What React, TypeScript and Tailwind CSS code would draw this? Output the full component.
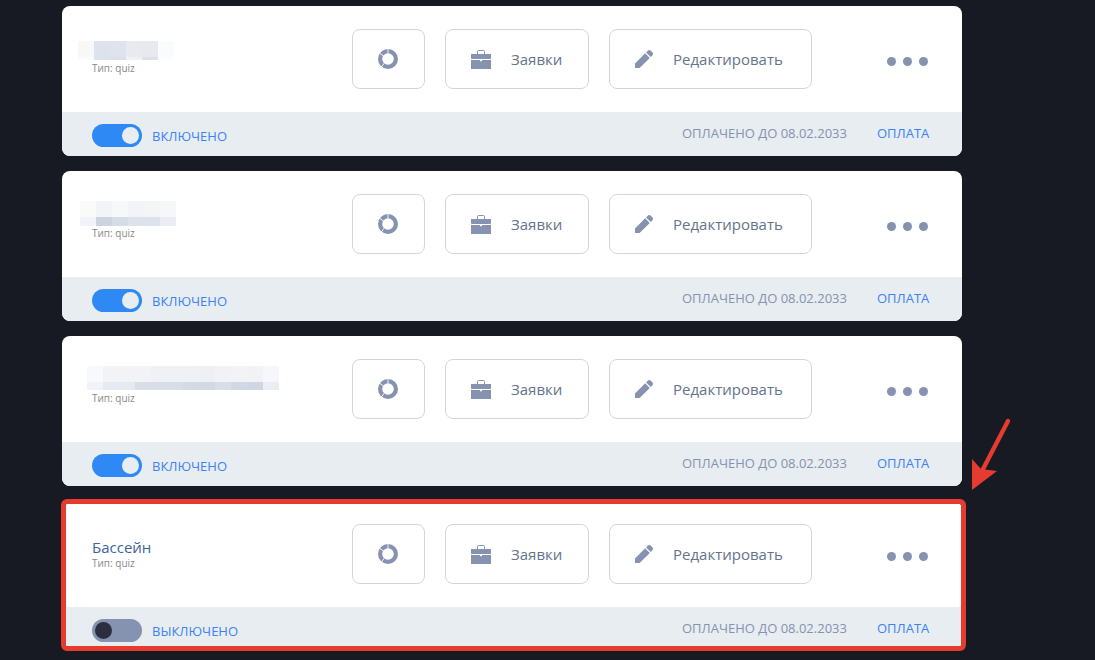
import clsx from 'clsx'

interface Mask {
  position: string
  bottomRow: string
  rows: string[][]
}

interface Quiz {
  id: string
  name?: string
  mask?: Mask
  enabled: boolean
  marked?: boolean
}

const paidUntil = '08.02.2033'

const quizzes: Quiz[] = [
  {
    id: 'quiz-1',
    enabled: true,
    mask: {
      position: '-left-3.5 -top-px',
      bottomRow: 'h-[3px]',
      rows: [
        ['bg-[#f8f8f9]', 'bg-[#dce3ed]', 'bg-[#dfe3ed]', 'bg-[#e9eaf0]', 'bg-[#e8e9ee]', 'bg-[#fafbfd]'],
        ['bg-[#fbfbfc]', 'bg-[#dce3ed]', 'bg-[#dbe1eb]', 'bg-[#f0f1f6]', 'bg-[#dbe1eb]', 'bg-[#fdfdfe]'],
      ],
    },
  },
  {
    id: 'quiz-2',
    enabled: true,
    mask: {
      position: '-left-3 -top-1.5',
      bottomRow: 'h-[9px]',
      rows: [
        ['bg-[#fafaf9]', 'bg-[#f2f4f8]', 'bg-[#f6f8fa]', 'bg-[#f3f4f8]', 'bg-[#f4f5f7]', 'bg-[#f6f7f9]'],
        ['bg-[#f2f3f8]', 'bg-[#cdd3df]', 'bg-[#d5dce6]', 'bg-[#dee2ea]', 'bg-[#dce3ed]', 'bg-[#eaedf3]'],
      ],
    },
  },
  {
    id: 'quiz-3',
    enabled: true,
    mask: {
      position: '-left-[5px] -top-1.5',
      bottomRow: 'h-2',
      rows: [
        ['bg-[#f8f9fb]', 'bg-[#f2f3f7]', 'bg-[#f2f3f7]', 'bg-[#f3f3f5]', 'bg-[#f0f1f5]', 'bg-[#f0f1f5]', 'bg-[#f0f1f5]', 'bg-[#eff0f4]', 'bg-[#f2f2f4]', 'bg-[#f2f3f6]', 'bg-[#f1f2f6]', 'bg-[#f6f7fa]'],
        ['bg-[#f2f3f8]', 'bg-[#e5e9f0]', 'bg-[#e5e9f0]', 'bg-[#d9dde8]', 'bg-[#d8dee8]', 'bg-[#d8dee8]', 'bg-[#d3dae6]', 'bg-[#d2d8e4]', 'bg-[#d9dde6]', 'bg-[#cfd9e5]', 'bg-[#cfd6e2]', 'bg-[#eaedf2]'],
      ],
    },
  },
  { id: 'quiz-4', name: 'Бассейн', enabled: false, marked: true },
]

function RingIcon() {
  return (
    <svg className="size-5" viewBox="0 0 20 20" fill="none" aria-hidden="true">
      <circle cx="10" cy="10" r="7.9" stroke="#8592b0" strokeWidth="4.2" />
      <path d="M10 0v4.5M1.2 4l4.6 3.2M3.4 18l2.8-3.8" stroke="#fff" strokeWidth="0.9" />
    </svg>
  )
}

function BriefcaseIcon() {
  return (
    <svg className="size-5" viewBox="0 0 20 20" aria-hidden="true">
      <path d="M6.5 5V2.5a1 1 0 0 1 1-1h5a1 1 0 0 1 1 1V5" fill="none" stroke="#8592b0" />
      <path d="M0 5h20v4.5l-1 .5H1l-1-.5zM0 10.7l1 .3h8v1.3h2V11h8l1-.3V20H0z" fill="#8592b0" />
    </svg>
  )
}

function PencilIcon() {
  return (
    <svg className="size-[18px]" viewBox="0 0 18 18" fill="#8592b0" aria-hidden="true">
      <path d="M0 18v-4.6L10.2 3.3l4.6 4.6L4.6 18zM11.1 2.4l1.6-1.6a2.2 2.2 0 0 1 3.1 0l1.5 1.5a2.2 2.2 0 0 1 0 3.1L15.7 7z" />
    </svg>
  )
}

function HiddenName({ position, bottomRow, rows }: Mask) {
  return (
    <span className={clsx('absolute', position)}>
      {rows.map((cells, row) => (
        <span key={row} className="flex">
          {cells.map((color, i) => (
            <span key={i} className={clsx('w-4', row === 0 ? 'h-4' : bottomRow, color)} />
          ))}
        </span>
      ))}
    </span>
  )
}

function Marker() {
  return (
    <>
      <div className="pointer-events-none absolute -left-px -right-1 -top-0.5 bottom-0 rounded-md border-[5px] border-[#e63c30]" />
      <svg className="absolute -right-[50px] -top-[84px] h-[75px] w-[42px]" viewBox="0 0 42 75" aria-hidden="true">
        <path d="M38 4 12 54" stroke="#e63c30" strokeWidth="4.4" strokeLinecap="round" />
        <path d="M2 73V42l9 10 16 2z" fill="#e63c30" />
      </svg>
    </>
  )
}

const buttonStyle =
  'flex h-[60px] shrink-0 items-center gap-5 rounded-lg border border-[#d2d5da] px-[25px] text-[15px] text-[#64748b]'

function QuizCard({ id, name, mask, enabled, marked }: Quiz) {
  return (
    <article className="relative">
      <div className="overflow-hidden rounded-lg bg-white">
        <div className="flex h-[106px] items-center pr-[34px]">
          <div className="w-[290px] shrink-0 pb-0.5 pl-[30px]">
            <h2 className="relative h-5 text-[15px] leading-5 text-[#3f649b]">
              {name}
              {mask && <HiddenName {...mask} />}
            </h2>
            <p className="text-[10px] leading-3 text-[#888]">Тип: quiz</p>
          </div>

          <div className="flex gap-5">
            <button type="button" aria-label="Статистика" className={clsx(buttonStyle, 'w-[73px]')}>
              <RingIcon />
            </button>
            <button type="button" className={clsx(buttonStyle, 'w-36')}>
              <BriefcaseIcon />
              Заявки
            </button>
            <button type="button" className={clsx(buttonStyle, 'w-[203px]')}>
              <PencilIcon />
              Редактировать
            </button>
          </div>

          <button type="button" aria-label="Ещё" className="ml-auto flex gap-[7px] pt-1">
            <span className="size-[9px] rounded-full bg-[#8592b0]" />
            <span className="size-[9px] rounded-full bg-[#8592b0]" />
            <span className="size-[9px] rounded-full bg-[#8592b0]" />
          </button>
        </div>

        <div className="flex h-11 items-start justify-between bg-[#e8edf1] px-[30px] text-[13px] leading-5">
          <div className="flex gap-2.5 pt-3">
            <input
              id={id}
              type="checkbox"
              defaultChecked={enabled}
              className="h-[23px] w-[50px] appearance-none rounded-full bg-[#8592b0] p-[3px] before:block before:size-[17px] before:rounded-full before:bg-[#2a2e3e] checked:bg-[#2e89f5] checked:before:ml-auto checked:before:bg-[#e8edf1]"
            />
            <label htmlFor={id} className="pt-0.5 text-[#3b82f6]">
              {enabled ? 'ВКЛЮЧЕНО' : 'ВЫКЛЮЧЕНО'}
            </label>
          </div>
          <div className="flex pt-[11px]">
            <span className="w-[195px] text-[#8592b0]">ОПЛАЧЕНО ДО {paidUntil}</span>
            <a href="#" className="w-[55px] text-[#3b82f6]">
              ОПЛАТА
            </a>
          </div>
        </div>
      </div>
      {marked && <Marker />}
    </article>
  )
}

export default function App() {
  return (
    <main className="flex min-h-screen flex-col gap-[15px] bg-[#171a23] pb-2 pl-[62px] pr-[133px] pt-1.5 font-['Open_Sans','Noto_Sans',sans-serif]">
      {quizzes.map((quiz) => (
        <QuizCard key={quiz.id} {...quiz} />
      ))}
    </main>
  )
}
